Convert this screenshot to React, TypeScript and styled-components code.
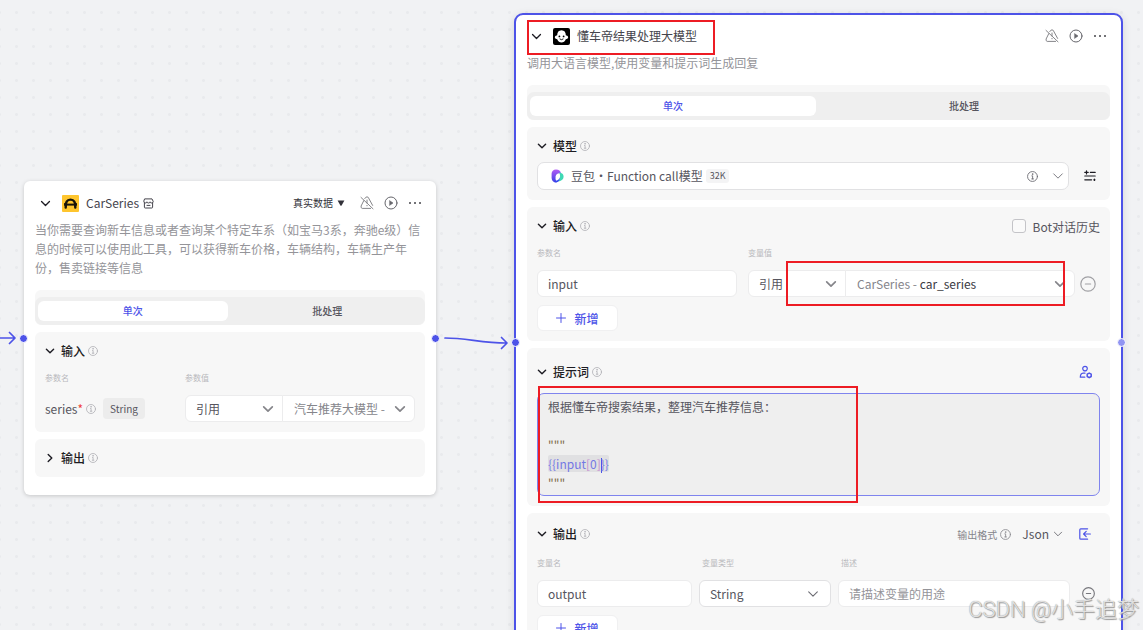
import React from 'react';
import styled, { createGlobalStyle, css } from 'styled-components';

const color = {
  brand: '#4d53e8',
  canvas: '#f1f2f4',
  section: '#f7f7f7',
  line: '#ececed',
  title: '#1d1c23',
  text: '#56555e',
  muted: '#949499',
  faint: '#b9b9bd',
  mark: '#ed1c24',
};

const GlobalStyle = createGlobalStyle`
  *, *::before, *::after { box-sizing: border-box; }
  body {
    margin: 0;
    font-family: "Noto Sans CJK SC", "Noto Sans", sans-serif;
    font-size: 12px;
    color: ${color.text};
    overflow: hidden;
  }
  button, input, select { font: inherit; color: inherit; }
`;

const Canvas = styled.main`
  position: relative;
  height: 100vh;
  overflow: hidden;
  background-color: ${color.canvas};
  background-image: radial-gradient(circle, #e9eaed 1px, transparent 2px);
  background-size: 17px 17px;
  background-position: 8px 4px;
`;

const Edges = styled.svg`
  position: absolute;
  left: 0;
  top: 0;
  width: 520px;
  height: 400px;
  fill: none;
  stroke: ${color.brand};
  stroke-width: 1.7;
  stroke-linecap: round;
  stroke-linejoin: round;
  pointer-events: none;
`;

const Node = styled.article<{ $x: number; $y: number; $w: number; $active?: boolean }>`
  position: absolute;
  left: ${(p) => p.$x}px;
  top: ${(p) => p.$y}px;
  width: ${(p) => p.$w}px;
  background: #fff;
  border-radius: 6px;
  padding: 10px 11px 18px;
  box-shadow: 0 1px 4px rgba(0, 0, 0, 0.18);
  ${(p) =>
    p.$active &&
    css`
      border: 2px solid ${color.brand};
      border-radius: 9px;
      padding: 9px 11px 18px;
      box-shadow: 0 2px 8px rgba(0, 0, 0, 0.12);
    `}
`;

const Port = styled.span<{ $x: number; $y: number; $soft?: boolean }>`
  position: absolute;
  left: ${(p) => p.$x}px;
  top: ${(p) => p.$y}px;
  width: 9px;
  height: 9px;
  border: 1px solid #fff;
  border-radius: 50%;
  background: ${(p) => (p.$soft ? '#9195f2' : color.brand)};
`;

const Mark = styled.span<{ $x: number; $y: number; $w: number; $h: number }>`
  position: absolute;
  left: ${(p) => p.$x}px;
  top: ${(p) => p.$y}px;
  width: ${(p) => p.$w}px;
  height: ${(p) => p.$h}px;
  border: 2px solid ${color.mark};
  pointer-events: none;
`;

const NodeHeader = styled.header`
  display: flex;
  align-items: center;
  height: 24px;
  gap: 7px;
`;

const IconButton = styled.button<{ $w: number; $tone?: string }>`
  display: flex;
  align-items: center;
  justify-content: center;
  flex: none;
  width: ${(p) => p.$w}px;
  padding: 0;
  border: 0;
  background: none;
  color: ${(p) => p.$tone || color.title};
`;

const NodeTitle = styled.h2`
  margin: 0;
  font-size: 12px;
  font-weight: 400;
  line-height: 18px;
  color: #45444c;
  display: flex;
  align-items: center;
  gap: 4px;
`;

const HeaderActions = styled.div`
  display: flex;
  align-items: center;
  gap: 10px;
  margin-left: auto;
  padding-right: 3px;
`;

const BareSelect = styled.select<{ $small?: boolean }>`
  appearance: none;
  border: 0;
  padding: 0;
  background: none;
  field-sizing: content;
  font-size: ${(p) => (p.$small ? 10 : 12)}px;
  line-height: 18px;
  outline: none;
`;

const SourcePicker = styled.label`
  display: flex;
  align-items: center;
  gap: 4px;
  color: #33323a;
  margin-right: 5px;
`;

const Description = styled.p`
  margin: 5px 0 13px;
  line-height: 19px;
  color: ${color.muted};
`;

const Stack = styled.div`
  display: flex;
  flex-direction: column;
  gap: 7px;
`;

const Tabs = styled.div`
  padding-top: 7px;
  border-radius: 6px;
  background: ${color.section};
`;

const TabTrack = styled.div`
  display: flex;
  gap: 5px;
  padding: 4px 3px;
  border-radius: 7px;
  background: #efefef;
`;

const Tab = styled.button<{ $on?: boolean }>`
  flex: 1;
  height: 20px;
  padding: 0;
  border: 0;
  border-radius: 6px;
  font-size: 10px;
  line-height: 20px;
  font-weight: 500;
  background: ${(p) => (p.$on ? '#fff' : 'transparent')};
  color: ${(p) => (p.$on ? color.brand : color.text)};
`;

const Section = styled.section`
  padding: 10px;
  border-radius: 6px;
  background: ${color.section};
`;

const SectionHead = styled.div<{ $h?: number }>`
  display: flex;
  align-items: center;
  height: ${(p) => p.$h || 18}px;
`;

const SectionTitle = styled.h3`
  margin: 0 3px 0 6px;
  font-size: 12px;
  line-height: 18px;
  font-weight: 500;
  color: ${color.title};
`;

const HeadTools = styled.div`
  display: flex;
  align-items: center;
  margin-left: auto;
`;

const Grid = styled.div<{ $cols: string; $gap: number }>`
  display: grid;
  grid-template-columns: ${(p) => p.$cols};
  column-gap: ${(p) => p.$gap}px;
  align-items: center;
`;

const LabelRow = styled(Grid)`
  margin: 12px 0 11px;
`;

const ColumnLabel = styled.span<{ $inset?: boolean }>`
  font-size: 8px;
  line-height: 12px;
  color: ${color.faint};
  padding-left: ${(p) => (p.$inset ? 3 : 0)}px;
`;

const TextInput = styled.input`
  width: 100%;
  min-width: 0;
  height: 27px;
  padding: 0 10px;
  border: 1px solid ${color.line};
  border-radius: 6px;
  background: #fff;
  outline: none;
  &::placeholder { color: ${color.muted}; }
`;

const SelectBox = styled.div<{ $strong?: boolean }>`
  display: flex;
  align-items: center;
  min-width: 0;
  height: 27px;
  padding: 0 11px 0 10px;
  border: 1px solid ${(p) => (p.$strong ? '#e1e1e3' : color.line)};
  border-radius: 6px;
  background: #fff;
  select { flex: 1; min-width: 0; }
  svg { flex: none; }
`;

const ModelRow = styled.div`
  display: flex;
  align-items: center;
  gap: 11px;
  margin-top: 7px;
`;

const ModelBox = styled.div`
  display: flex;
  flex: 1;
  align-items: center;
  height: 28px;
  padding: 0 4px 0 13px;
  border: 1px solid #e1e1e3;
  border-radius: 7px;
  background: #fff;
`;

const ModelName = styled(BareSelect)`
  margin-left: 7px;
`;

const Badge = styled.span`
  margin-left: 3px;
  padding: 0 4px;
  border-radius: 3px;
  font-size: 9px;
  line-height: 14px;
  background: #f4f4f5;
`;

const ModelTools = styled.div`
  display: flex;
  align-items: center;
  gap: 14px;
  margin-left: auto;
  color: #77777d;
`;

const ValueGroup = styled.div`
  display: flex;
  flex: 1;
  min-width: 0;
  ${SelectBox} {
    border-radius: 6px 0 0 6px;
    flex: 0 0 98px;
    padding-right: 8px;
  }
`;

const ReferenceButton = styled.button`
  display: flex;
  flex: 1;
  align-items: center;
  justify-content: space-between;
  min-width: 0;
  height: 27px;
  margin-left: -1px;
  padding: 0 8px 0 11px;
  border: 1px solid ${color.line};
  border-radius: 0 6px 6px 0;
  background: #fff;
  color: #85858b;
  white-space: pre;
`;

const Variable = styled.span`
  color: #3a3942;
`;

const ValueCell = styled.div`
  display: flex;
  align-items: center;
`;

const ParamName = styled.div`
  display: flex;
  align-items: center;
  line-height: 18px;
`;

const Required = styled.span`
  margin-right: 3px;
  font-size: 12px;
  color: #f0413c;
`;

const TypeTag = styled.span`
  margin-left: 7px;
  padding: 0 7px;
  border-radius: 4px;
  font-size: 10px;
  line-height: 21px;
  background: #ececec;
`;

const AddButton = styled.button`
  display: flex;
  align-items: center;
  justify-content: center;
  gap: 8px;
  width: 81px;
  height: 26px;
  margin-top: 8px;
  padding: 0;
  border: 1px solid #f0f0f1;
  border-radius: 6px;
  background: #fff;
  color: ${color.brand};
  font-weight: 500;
`;

const HistoryOption = styled.label`
  display: flex;
  align-items: center;
  gap: 7px;
`;

const Checkbox = styled.input`
  appearance: none;
  width: 14px;
  height: 14px;
  margin: 0;
  border: 1px solid #c4c4c8;
  border-radius: 3px;
  background: #fafafa;
`;

const Editor = styled.div`
  margin-top: 7px;
  padding: 3px 10px;
  border: 1px solid #7f84ee;
  border-radius: 7px;
  background: #efefef;
  line-height: 19px;
  white-space: pre-wrap;
  outline: none;
  p { margin: 0; min-height: 19px; }
`;

const Quote = styled.p`
  color: #7d6a48;
`;

const Token = styled.span`
  background: #e0e0e2;
  color: #7478e4;
  border-radius: 2px;
  line-height: 16px;
`;

const Bracket = styled.span`
  color: #c58fd0;
`;

const Caret = styled.span`
  display: inline-block;
  width: 1px;
  height: 15px;
  margin-right: -1px;
  vertical-align: middle;
  background: ${color.brand};
`;

const FormatLabel = styled.label`
  margin-right: 3px;
  font-size: 10px;
  color: #85858b;
`;

const FormatSelect = styled(BareSelect)`
  margin: 0 4px 0 11px;
`;

const FormatTools = styled(HeadTools)`
  padding-right: 9px;
  ${IconButton} { margin-left: 16px; }
`;

const PromptTools = styled(HeadTools)`
  padding-right: 7px;
`;

const Watermark = styled.div`
  position: absolute;
  right: 4px;
  bottom: 4px;
  font-family: Roboto, "Noto Sans CJK SC", sans-serif;
  font-size: 22px;
  font-weight: 300;
  line-height: 32px;
  color: rgba(240, 240, 240, 0.85);
  text-shadow: 0 0 1px #888, 1px 1px 1px #999;
  white-space: nowrap;
  pointer-events: none;
`;

const Stroke = styled.svg`
  display: block;
  flex: none;
  fill: none;
  stroke: currentColor;
  stroke-linecap: round;
  stroke-linejoin: round;
`;

const Chevron = ({ size = 10, right = false, width = 1.4, tone = 'currentColor' }) => (
  <Stroke width={size} height={size} viewBox="0 0 10 10" strokeWidth={width} color={tone}>
    <path d={right ? 'M3.2 1.4 6.8 5 3.2 8.6' : 'M1.4 3.2 5 6.8 8.6 3.2'} />
  </Stroke>
);

const Info = ({ size = 10, tone = '#b0b0b5' }) => (
  <Stroke width={size} height={size} viewBox="0 0 10 10" strokeWidth={0.8} color={tone} aria-hidden>
    <circle cx="5" cy="5" r="4.5" />
    <path d="M4.4 4.4H5.1V7.2M4.3 7.2H5.9" />
    <circle cx="5" cy="2.8" r=".3" />
  </Stroke>
);

const AlertOff = () => (
  <Stroke width={14} height={14} viewBox="0 0 14 14" strokeWidth={0.9}>
    <path d="M4.8 2.6 5.8 1.3Q7 .4 8.2 1.3L12.6 9.4M3.8 4.6 1.1 10Q.6 12 2.2 12.4H10.6" />
    <path d="M1 1.4 13 12.8M7 4V7M7 9.4V9.8" />
  </Stroke>
);

const Play = () => (
  <Stroke width={14} height={14} viewBox="0 0 14 14" strokeWidth={1}>
    <circle cx="7" cy="7" r="6" />
    <path d="M5.8 4.8 9 7 5.8 9.2Z" fill="currentColor" strokeWidth={0.6} />
  </Stroke>
);

const More = () => (
  <svg width="14" height="14" viewBox="0 0 14 14" fill="currentColor">
    <circle cx="2" cy="7" r="1" />
    <circle cx="7" cy="7" r="1" />
    <circle cx="12" cy="7" r="1" />
  </svg>
);

const Store = () => (
  <Stroke width={11} height={11} viewBox="0 0 11 11" strokeWidth={1}>
    <path d="M2 .9H9L10.2 3.4Q10.2 5 8.8 5 7.2 5 7.1 3.8 6.9 5 5.5 5 4.1 5 3.9 3.8 3.8 5 2.2 5 .8 5 .8 3.4ZM1.4 5V9.2Q1.4 10 2.2 10H8.8Q9.6 10 9.6 9.2V5M4 7.4H7" />
  </Stroke>
);

const Minus = ({ size = 16, tone = '#a0a0a4' }) => (
  <Stroke width={size} height={size} viewBox="0 0 16 16" strokeWidth={size > 14 ? 1.2 : 1.4} color={tone}>
    <circle cx="8" cy="8" r="7.2" />
    <path d="M5.4 8H10.6" />
  </Stroke>
);

const Plus = () => (
  <Stroke width={10} height={10} viewBox="0 0 10 10" strokeWidth={1}>
    <path d="M5 .5V9.5M.5 5H9.5" />
  </Stroke>
);

const Sliders = () => (
  <Stroke width={12} height={12} viewBox="0 0 12 12" strokeWidth={1.2}>
    <path d="M.8 2.4H4.2M2.5 .8V4M6.4 2.4H11.2M.8 6H11.2M.8 9.8H7.6M10.4 9.2V10.4M9.8 9.8H11" />
  </Stroke>
);

const UserGear = () => (
  <Stroke width={14} height={14} viewBox="0 0 14 14" strokeWidth={1.2}>
    <circle cx="6" cy="3.6" r="2.3" />
    <path d="M6 8.2H4Q1.4 8.4 1.3 12.2H5.8" />
    <path d="M10.2 8.1 12.2 9.2V11.5L10.2 12.7 8.2 11.5V9.2Z" strokeWidth={1.5} />
  </Stroke>
);

const ImportIcon = () => (
  <Stroke width={12} height={12} viewBox="0 0 12 12" strokeWidth={1.2}>
    <path d="M8.6 .8H1.7Q.8 .8 .8 1.7V10.3Q.8 11.2 1.7 11.2H8.6M11.4 6H4.8M7.2 3.4 4.6 6 7.2 8.6" />
  </Stroke>
);

const CarLogo = () => (
  <svg width="17" height="17" viewBox="0 0 17 17" aria-hidden>
    <rect width="17" height="17" rx="1" fill="#fec52e" />
    <path d="M3.7 12.6Q3.2 4.6 8.5 4.6T13.3 12.6" fill="none" stroke="#17130a" strokeWidth="2.4" strokeLinecap="round" />
    <path d="M4 9.6H13" stroke="#17130a" strokeWidth="2" />
    <path d="M2 8.4 3.4 7.4V10.4L2 10.8ZM15 8.4 13.6 7.4V10.4L15 10.8Z" fill="#17130a" />
  </svg>
);

const FaceLogo = () => (
  <svg width="17" height="17" viewBox="0 0 17 17" aria-hidden>
    <rect width="17" height="17" rx="2" fill="#000" />
    <path d="M8.5 2.2Q12.8 2.4 12.8 7.2 15.4 7.6 15.2 9.6 14.8 11.2 12.8 11.2 11.4 14.4 8.5 14.4T4.2 11.2Q2.2 11.2 1.8 9.6 1.6 7.6 4.2 7.2 4.2 2.4 8.5 2.2Z" fill="#fff" />
    <circle cx="6.4" cy="8.4" r=".9" />
    <circle cx="10.6" cy="8.4" r=".9" />
    <path d="M6.9 11.1Q8.5 12.5 10.1 11.1" fill="none" stroke="#000" strokeWidth=".9" strokeLinecap="round" />
  </svg>
);

const ModelLogo = () => (
  <svg width="13" height="14" viewBox="0 0 13 14" aria-hidden>
    <defs>
      <linearGradient id="petal" x1="0" y1="0" x2="0" y2="1">
        <stop offset="0" stopColor="#b35cf5" />
        <stop offset="1" stopColor="#3b3fe6" />
      </linearGradient>
    </defs>
    <path d="M5 .4Q9.4 .4 10 4.4 5.6 3.6 4.6 7.2 4 10 5.6 13.4 1 13.6 .6 9V4.6Q.8 .6 5 .4Z" fill="url(#petal)" />
    <path d="M8.2 3.6Q12.6 4.2 12.6 7.8 12.4 11.6 7.6 12.4 10.2 8 8.2 3.6Z" fill="#3fd8b4" />
    <path d="M4.2 11.8Q8 11.4 8.8 8.2 9.4 13 4.6 13.6Z" fill="#3448ee" />
  </svg>
);

const Triangle = () => (
  <svg width="8" height="6" viewBox="0 0 8 6" fill="currentColor" aria-hidden>
    <path d="M.6 .4H7.4L4.6 5.4Q4 6 3.4 5.4Z" />
  </svg>
);

function ModeTabs() {
  return (
    <Tabs>
      <TabTrack role="tablist">
        <Tab role="tab" aria-selected $on>单次</Tab>
        <Tab role="tab" aria-selected={false}>批处理</Tab>
      </TabTrack>
    </Tabs>
  );
}

function Actions({ children }: { children?: React.ReactNode }) {
  return (
    <HeaderActions>
      {children}
      <IconButton $w={14} $tone="#77777c" aria-label="异常处理"><AlertOff /></IconButton>
      <IconButton $w={14} $tone="#66666c" aria-label="运行"><Play /></IconButton>
      <IconButton $w={14} $tone="#44444a" aria-label="更多"><More /></IconButton>
    </HeaderActions>
  );
}

function Head({ title, closed, h, children }: { title: string; closed?: boolean; h?: number; children?: React.ReactNode }) {
  return (
    <SectionHead $h={h}>
      <IconButton $w={10} aria-expanded={!closed} aria-label={title}><Chevron right={closed} /></IconButton>
      <SectionTitle>{title}</SectionTitle>
      <Info />
      {children}
    </SectionHead>
  );
}

function KindSelect() {
  return (
    <SelectBox>
      <BareSelect aria-label="取值方式"><option>引用</option></BareSelect>
      <Chevron size={12} tone="#85858a" />
    </SelectBox>
  );
}

function CarSeriesNode() {
  return (
    <Node $x={24} $y={181} $w={412}>
      <NodeHeader>
        <IconButton $w={20} aria-label="收起"><Chevron size={11} width={1.2} /></IconButton>
        <CarLogo />
        <NodeTitle>CarSeries <Store /></NodeTitle>
        <Actions>
          <SourcePicker>
            <BareSelect $small aria-label="数据来源"><option>真实数据</option></BareSelect>
            <Triangle />
          </SourcePicker>
        </Actions>
      </NodeHeader>
      <Description>
        当你需要查询新车信息或者查询某个特定车系（如宝马3系，奔驰e级）信息的时候可以使用此工具，可以获得新车价格，车辆结构，车辆生产年份，售卖链接等信息
      </Description>
      <Stack>
        <ModeTabs />
        <Section>
          <Head title="输入" />
          <LabelRow $cols="140px 1fr" $gap={0}>
            <ColumnLabel>参数名</ColumnLabel>
            <ColumnLabel>参数值</ColumnLabel>
          </LabelRow>
          <Grid $cols="140px 1fr" $gap={0}>
            <ParamName>
              series<Required>*</Required>
              <Info />
              <TypeTag>String</TypeTag>
            </ParamName>
            <ValueGroup>
              <KindSelect />
              <ReferenceButton aria-haspopup="listbox">
                <span>汽车推荐大模型 -</span>
                <Chevron size={12} tone="#85858a" />
              </ReferenceButton>
            </ValueGroup>
          </Grid>
        </Section>
        <Section><Head title="输出" closed /></Section>
      </Stack>
      <Port $x={-5} $y={153} />
      <Port $x={407} $y={153} />
    </Node>
  );
}

function ModelNode() {
  return (
    <Node $x={514} $y={13} $w={609} $active>
      <NodeHeader>
        <IconButton $w={19} aria-label="收起"><Chevron size={11} width={1.2} /></IconButton>
        <FaceLogo />
        <NodeTitle>懂车帝结果处理大模型</NodeTitle>
        <Actions />
      </NodeHeader>
      <Description>调用大语言模型,使用变量和提示词生成回复</Description>
      <Stack>
        <ModeTabs />
        <Section>
          <Head title="模型" />
          <ModelRow>
            <ModelBox>
              <ModelLogo />
              <ModelName aria-label="模型"><option>豆包・Function call模型</option></ModelName>
              <Badge>32K</Badge>
              <ModelTools>
                <Info size={11} tone="#6b6b72" />
                <Chevron size={12} width={0.8} />
              </ModelTools>
            </ModelBox>
            <IconButton $w={20} aria-label="模型设置"><Sliders /></IconButton>
          </ModelRow>
        </Section>
        <Section>
          <Head title="输入">
            <HeadTools>
              <HistoryOption><Checkbox type="checkbox" />Bot对话历史</HistoryOption>
            </HeadTools>
          </Head>
          <LabelRow $cols="200px 1fr" $gap={11}>
            <ColumnLabel>参数名</ColumnLabel>
            <ColumnLabel>变量值</ColumnLabel>
          </LabelRow>
          <Grid $cols="200px 1fr" $gap={11}>
            <TextInput aria-label="参数名" defaultValue="input" />
            <ValueCell>
              <ValueGroup>
                <KindSelect />
                <ReferenceButton aria-haspopup="listbox">
                  <span>CarSeries - <Variable>car_series</Variable></span>
                  <Chevron size={12} tone="#85858a" />
                </ReferenceButton>
              </ValueGroup>
              <IconButton $w={25} aria-label="删除"><Minus /></IconButton>
            </ValueCell>
          </Grid>
          <AddButton><Plus />新增</AddButton>
        </Section>
        <Section>
          <Head title="提示词" h={28}>
            <PromptTools>
              <IconButton $w={14} $tone={color.brand} aria-label="优化提示词"><UserGear /></IconButton>
            </PromptTools>
          </Head>
          <Editor role="textbox" aria-multiline aria-label="提示词" contentEditable suppressContentEditableWarning spellCheck={false}>
            <p>根据懂车帝搜索结果，整理汽车推荐信息：</p>
            <p />
            <Quote>"""</Quote>
            <p><Token>{'{{input'}<Bracket>[</Bracket>0<Bracket>]</Bracket><Caret />{'}}'}</Token></p>
            <Quote>"""</Quote>
          </Editor>
        </Section>
        <Section>
          <Head title="输出" h={22}>
            <FormatTools>
              <FormatLabel htmlFor="format">输出格式</FormatLabel>
              <Info size={11} tone="#8d8d92" />
              <FormatSelect id="format"><option>Json</option></FormatSelect>
              <Chevron size={10} width={0.9} tone="#6b6b72" />
              <IconButton $w={12} $tone={color.brand} aria-label="导入"><ImportIcon /></IconButton>
            </FormatTools>
          </Head>
          <LabelRow $cols="155px 132px 1fr 23px" $gap={7}>
            <ColumnLabel>变量名</ColumnLabel>
            <ColumnLabel $inset>变量类型</ColumnLabel>
            <ColumnLabel $inset>描述</ColumnLabel>
          </LabelRow>
          <Grid $cols="155px 132px 1fr 23px" $gap={7}>
            <TextInput aria-label="变量名" defaultValue="output" />
            <SelectBox $strong>
              <BareSelect aria-label="变量类型"><option>String</option></BareSelect>
              <Chevron size={12} width={0.9} tone="#6b6b72" />
            </SelectBox>
            <TextInput aria-label="描述" placeholder="请描述变量的用途" />
            <IconButton $w={23} aria-label="删除"><Minus size={13} tone="#77777c" /></IconButton>
          </Grid>
          <AddButton><Plus />新增</AddButton>
        </Section>
      </Stack>
      <Port $x={-5} $y={323} />
      <Port $x={601} $y={323} $soft />
      <Mark $x={11} $y={5} $w={188} $h={35} />
      <Mark $x={270} $y={246} $w={279} $h={45} />
      <Mark $x={22} $y={371} $w={320} $h={117} />
    </Node>
  );
}

export default function App() {
  return (
    <>
      <GlobalStyle />
      <Canvas>
        <CarSeriesNode />
        <ModelNode />
        <Edges viewBox="0 0 520 400" aria-hidden>
          <path d="M0 338H14M9.5 332.5 15 338 9.5 343.5" />
          <path d="M445 338C466 338 482 343 506 343M501.5 337.5 507 343 501.5 348.5" />
        </Edges>
        <Watermark>CSDN @小手追梦</Watermark>
      </Canvas>
    </>
  );
}
